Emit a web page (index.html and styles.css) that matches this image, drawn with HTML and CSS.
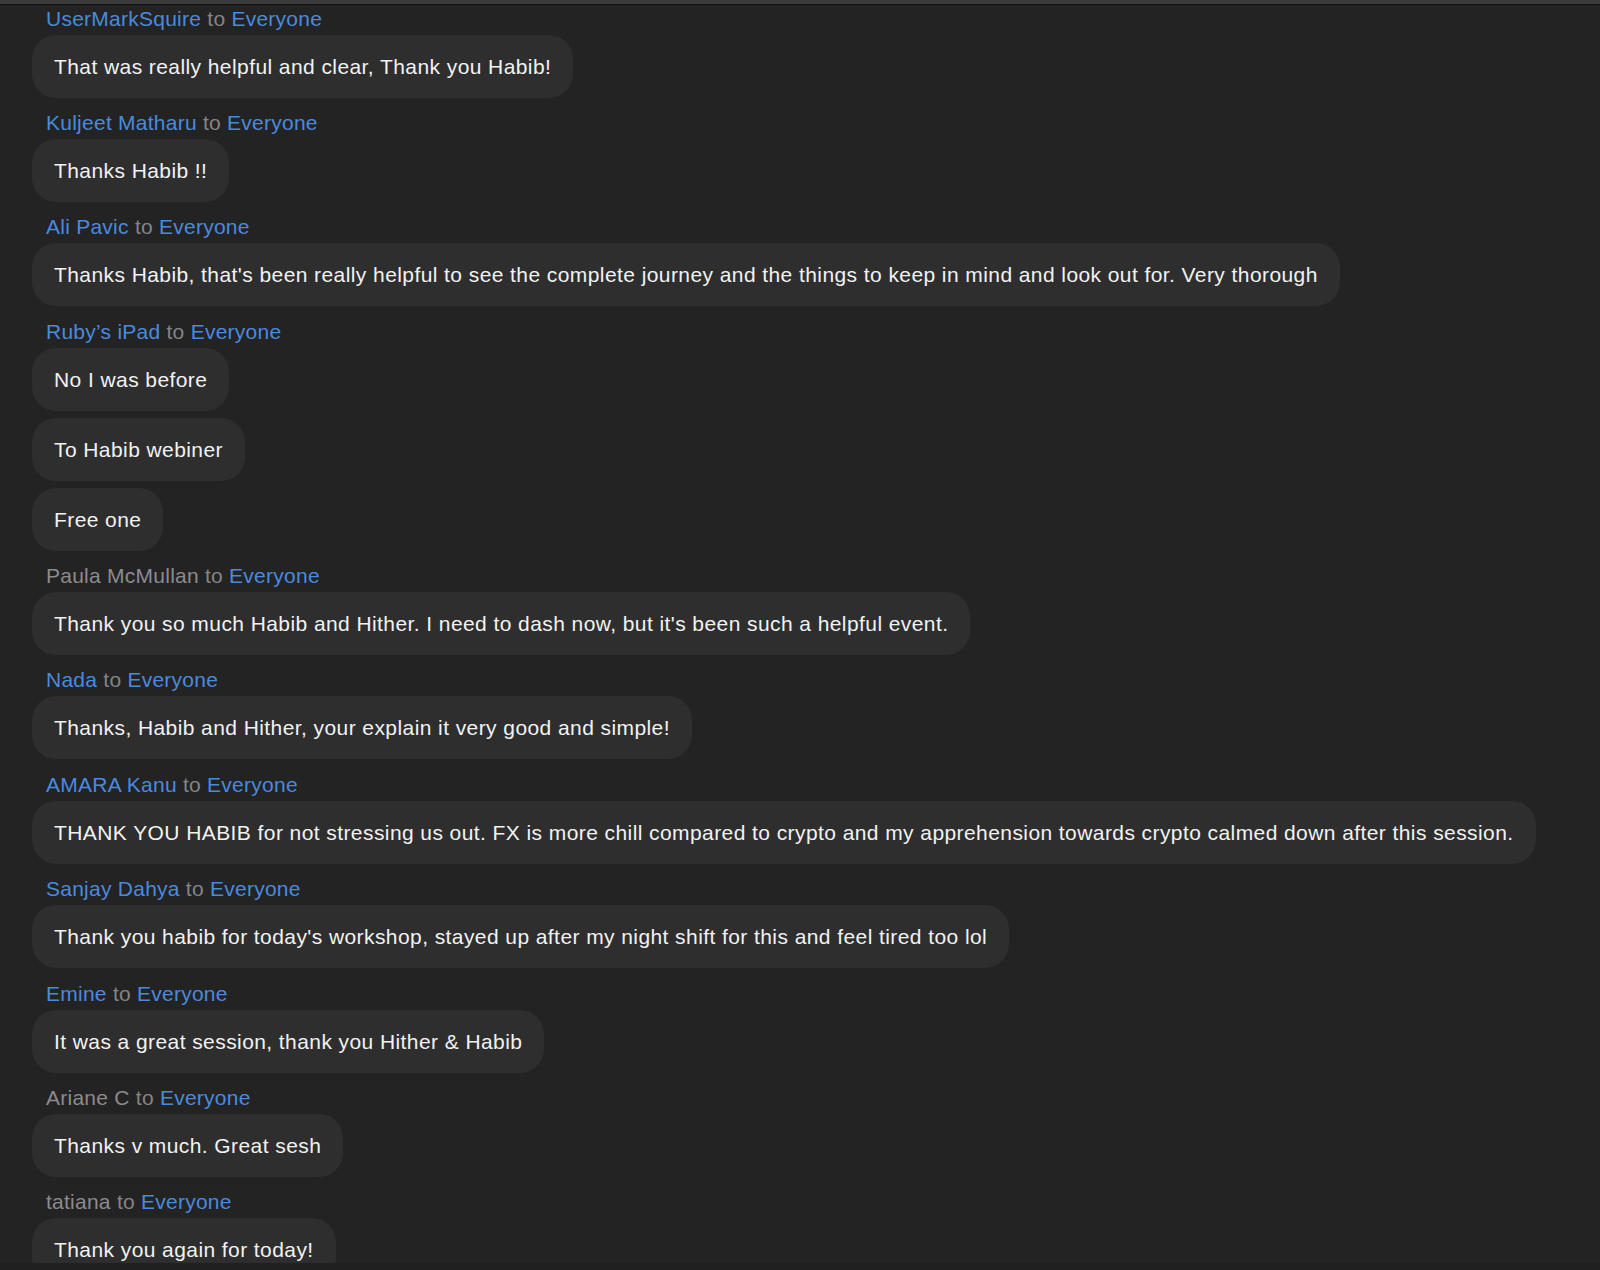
FILE: index.html
```html
<!DOCTYPE html>
<html lang="en">
<head>
<meta charset="utf-8">
<title>Chat</title>
<link rel="stylesheet" href="styles.css">
</head>
<body>
<div class="topbar"></div>
<div class="chat">
  <div class="group">
    <div class="head"><span class="name">UserMarkSquire</span> <span class="to">to</span> <span class="dest">Everyone</span></div>
    <div class="bubble">That was really helpful and clear, Thank you Habib!</div>
  </div>
  <div class="group">
    <div class="head"><span class="name">Kuljeet Matharu</span> <span class="to">to</span> <span class="dest">Everyone</span></div>
    <div class="bubble">Thanks Habib !!</div>
  </div>
  <div class="group">
    <div class="head"><span class="name">Ali Pavic</span> <span class="to">to</span> <span class="dest">Everyone</span></div>
    <div class="bubble">Thanks Habib, that's been really helpful to see the complete journey and the things to keep in mind and look out for. Very thorough</div>
  </div>
  <div class="group">
    <div class="head"><span class="name">Ruby’s iPad</span> <span class="to">to</span> <span class="dest">Everyone</span></div>
    <div class="bubble">No I was before</div>
    <div class="bubble">To Habib webiner</div>
    <div class="bubble">Free one</div>
  </div>
  <div class="group">
    <div class="head"><span class="name muted">Paula McMullan</span> <span class="to">to</span> <span class="dest">Everyone</span></div>
    <div class="bubble">Thank you so much Habib and Hither. I need to dash now, but it's been such a helpful event.</div>
  </div>
  <div class="group">
    <div class="head"><span class="name">Nada</span> <span class="to">to</span> <span class="dest">Everyone</span></div>
    <div class="bubble">Thanks, Habib and Hither, your explain it very good and simple!</div>
  </div>
  <div class="group">
    <div class="head"><span class="name">AMARA Kanu</span> <span class="to">to</span> <span class="dest">Everyone</span></div>
    <div class="bubble">THANK YOU HABIB for not stressing us out. FX is more chill compared to crypto and my apprehension towards crypto calmed down after this session.</div>
  </div>
  <div class="group">
    <div class="head"><span class="name">Sanjay Dahya</span> <span class="to">to</span> <span class="dest">Everyone</span></div>
    <div class="bubble">Thank you habib for today's workshop, stayed up after my night shift for this and feel tired too lol</div>
  </div>
  <div class="group">
    <div class="head"><span class="name">Emine</span> <span class="to">to</span> <span class="dest">Everyone</span></div>
    <div class="bubble">It was a great session, thank you Hither &amp; Habib</div>
  </div>
  <div class="group">
    <div class="head"><span class="name muted">Ariane C</span> <span class="to">to</span> <span class="dest">Everyone</span></div>
    <div class="bubble">Thanks v much. Great sesh</div>
  </div>
  <div class="group">
    <div class="head"><span class="name muted">tatiana</span> <span class="to">to</span> <span class="dest">Everyone</span></div>
    <div class="bubble">Thank you again for today!</div>
  </div>
</div>
</body>
</html>
```

FILE: styles.css
```css
* { box-sizing: border-box; }
html, body {
  margin: 0;
  padding: 0;
  background: #202020;
}
body {
  font-family: "Liberation Sans", Arial, Helvetica, sans-serif;
  font-size: 21px;
  width: 1600px;
  height: 1270px;
  overflow: hidden;
}
.topbar {
  height: 5px;
  background: #3b3b3b;
  border-bottom: 1px solid #101010;
}
.chat {
  height: 1258px;
  overflow: hidden;
  background: #232323;
  padding: 1.5px 0 0 32px;
  display: flex;
  flex-direction: column;
  align-items: flex-start;
}
.group {
  display: flex;
  flex-direction: column;
  align-items: flex-start;
  margin-bottom: 13.4px;
  flex-shrink: 0;
}
.head {
  height: 24px;
  line-height: 24px;
  padding-left: 14px;
  margin-bottom: 4px;
  white-space: nowrap;
  letter-spacing: 0.25px;
}
.name, .dest { color: #4a8ade; }
.name.muted { color: #8b8b90; }
.to { color: #858585; }
.bubble {
  background: #2e2e2e;
  color: #f2f2f2;
  line-height: 25px;
  padding: 19px 22px;
  border-radius: 24px;
  white-space: nowrap;
  flex-shrink: 0;
  letter-spacing: 0.42px;
}
.bubble + .bubble { margin-top: 7px; }
```
